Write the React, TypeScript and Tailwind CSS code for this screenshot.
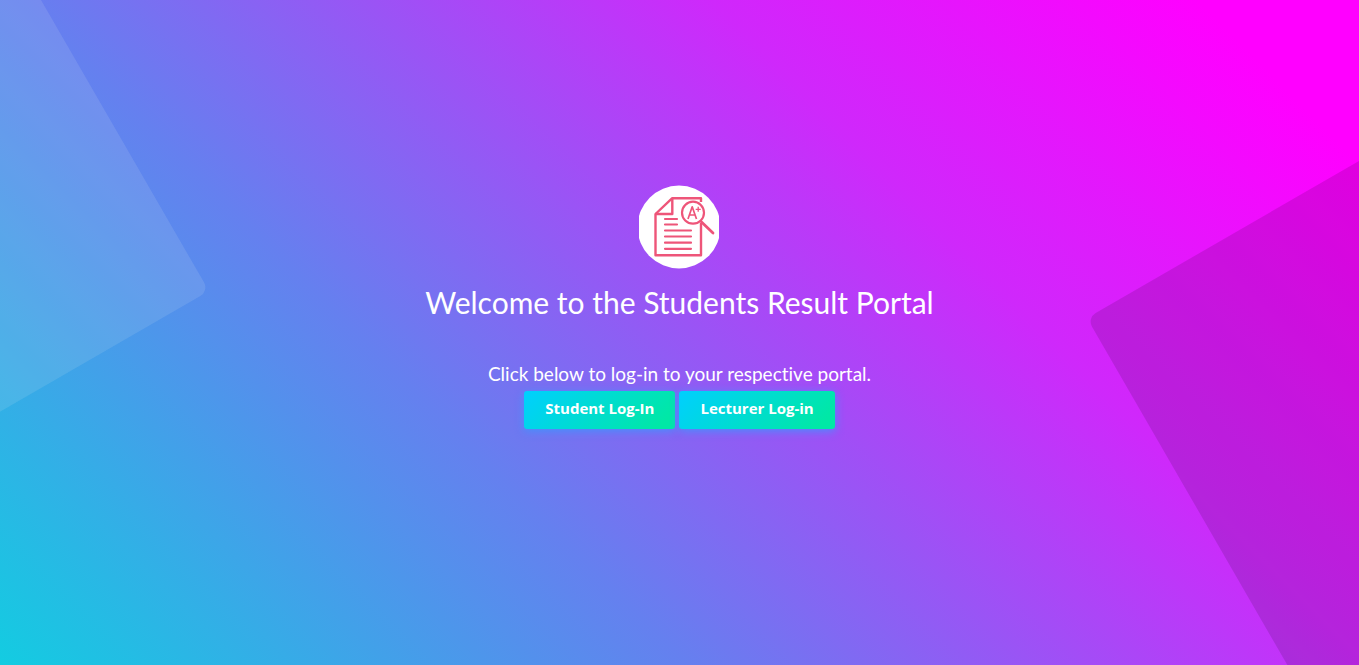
import React from "react";

function ResultLogo() {
  return (
    <svg viewBox="0 0 81 84" className="h-[84px] w-[81px]" role="img" aria-label="Student results">
      <defs>
        <clipPath id="logo-bounds">
          <rect width="80" height="84" />
        </clipPath>
      </defs>
      <ellipse cx="40" cy="42" rx="41.5" ry="41.5" fill="#fff" clipPath="url(#logo-bounds)" />
      <g fill="none" stroke="#ee5579" strokeWidth="2.4" strokeLinejoin="round">
        <path d="M62 17V13.300H33L16.500 29V70.300H62V38" />
        <path d="M33.300 13.300V29H16.500" />
        <path strokeWidth="2.200" strokeLinecap="round" d="M26 34h12M26 39.500h12M26 45.500h26M26 51.500h26M26 57.700h26M26 63.800h26" />
        <circle cx="54" cy="27.700" r="11" strokeWidth="2.200" fill="#fff" />
        <path strokeWidth="2.800" strokeLinecap="round" d="M62.500 37L74 48" />
        <path strokeWidth="1.700" d="M49 34L53.200 21.800L57.500 34M50.500 30h5.400" />
        <path strokeWidth="1.300" d="M56.700 24.300h5M59.200 21.800v5" />
      </g>
    </svg>
  );
}

function LoginLink({ href, children }: { href: string; children: React.ReactNode }) {
  return (
    <a
      href={href}
      className="rounded-[3px] bg-[linear-gradient(135deg,#00cfff_0%,#00e8a6_90%)] px-[21px] pt-[6px] pb-[10px] font-['Open_Sans',sans-serif] text-[15px] leading-[22px] font-bold text-white shadow-[0_2px_10px_rgba(60,150,255,0.9)]"
    >
      {children}
    </a>
  );
}

export default function App() {
  return (
    <main className="relative flex min-h-screen flex-col items-center overflow-hidden bg-[linear-gradient(45deg,#13cce1_0%,#6580ef_34%,#cf28fb_68%,#ff00ff_92%)] px-4 pt-[185px] text-center font-['Lato',sans-serif] text-white">
      <div className="absolute -top-[309px] -left-[391px] size-[600px] origin-bottom-right -rotate-30 rounded-[10px] bg-[#e6f2ec]/12" />
      <div className="absolute top-[318px] left-[80%] size-[600px] origin-top-left -rotate-30 rounded-[10px] bg-black/12" />
      <div className="relative flex flex-col items-center">
        <ResultLogo />
        <h1 className="mt-[15px] text-[30px] leading-9">Welcome to the Students Result Portal</h1>
        <p className="mt-10 text-[19px] leading-7 [font-variant-ligatures:none]">Click below to log-in to your respective portal.</p>
        <div className="mt-[3px] flex flex-wrap justify-center gap-1">
          <LoginLink href="#student">Student Log-In</LoginLink>
          <LoginLink href="#lecturer">Lecturer Log-in</LoginLink>
        </div>
      </div>
    </main>
  );
}
